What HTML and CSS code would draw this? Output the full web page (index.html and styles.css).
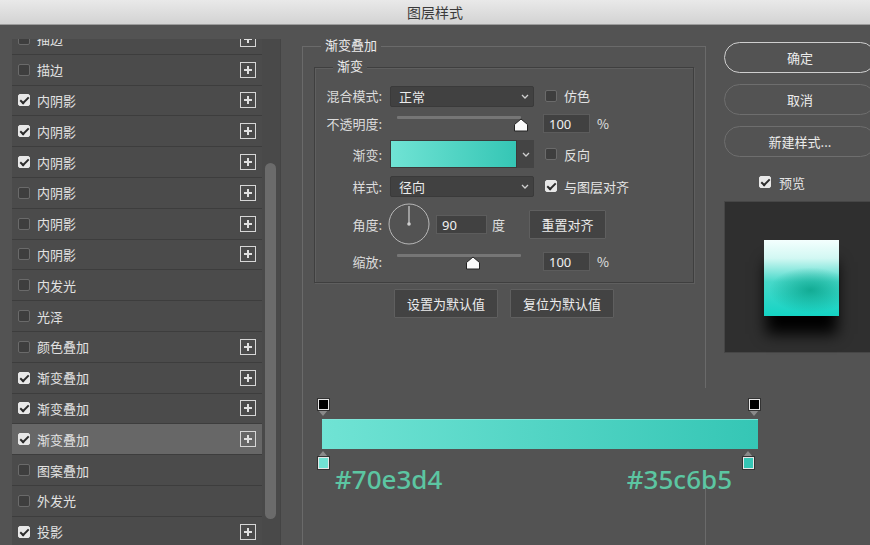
FILE: index.html
```html
<!DOCTYPE html>
<html lang="zh-CN">
<head>
    <meta charset="UTF-8">
    <meta name="viewport" content="width=device-width, initial-scale=1.0">
    <title>图层样式</title>
    <link rel="stylesheet" href="styles.css">
</head>
<body>
    <div class="titlebar">图层样式</div>

    <div class="main">
        <!-- 样式列表 -->
        <div class="styles-col">
            <div class="style-list">
                <div class="list-inner">
                    <div class="style-row"><span class="check"></span><span class="name">描边</span><span class="add"></span></div>
                    <div class="style-row"><span class="check"></span><span class="name">描边</span><span class="add"></span></div>
                    <div class="style-row"><span class="check on"></span><span class="name">内阴影</span><span class="add"></span></div>
                    <div class="style-row"><span class="check on"></span><span class="name">内阴影</span><span class="add"></span></div>
                    <div class="style-row"><span class="check on"></span><span class="name">内阴影</span><span class="add"></span></div>
                    <div class="style-row"><span class="check"></span><span class="name">内阴影</span><span class="add"></span></div>
                    <div class="style-row"><span class="check"></span><span class="name">内阴影</span><span class="add"></span></div>
                    <div class="style-row"><span class="check"></span><span class="name">内阴影</span><span class="add"></span></div>
                    <div class="style-row"><span class="check"></span><span class="name">内发光</span></div>
                    <div class="style-row"><span class="check"></span><span class="name">光泽</span></div>
                    <div class="style-row"><span class="check"></span><span class="name">颜色叠加</span><span class="add"></span></div>
                    <div class="style-row"><span class="check on"></span><span class="name">渐变叠加</span><span class="add"></span></div>
                    <div class="style-row"><span class="check on"></span><span class="name">渐变叠加</span><span class="add"></span></div>
                    <div class="style-row selected"><span class="check on"></span><span class="name">渐变叠加</span><span class="add"></span></div>
                    <div class="style-row"><span class="check"></span><span class="name">图案叠加</span></div>
                    <div class="style-row"><span class="check"></span><span class="name">外发光</span></div>
                    <div class="style-row"><span class="check on"></span><span class="name">投影</span><span class="add"></span></div>
                </div>
            </div>
            <div class="scroll-track"><div class="scroll-thumb"></div></div>
        </div>

        <!-- 渐变叠加选项 -->
        <div class="options-col">
            <div class="group outer">
                <span class="group-title">渐变叠加</span>
                <div class="group inner">
                    <span class="group-title">渐变</span>

                    <div class="form-row r1">
                        <label class="lbl">混合模式:</label>
                        <div class="select">正常
                            <svg class="chev" width="8" height="5" viewBox="0 0 8 5"><polyline points="1,1 4,4 7,1" fill="none" stroke="#cfcfcf" stroke-width="1.3"/></svg>
                        </div>
                        <span class="check opt"></span><span class="opt-text">仿色</span>
                    </div>

                    <div class="form-row r2">
                        <label class="lbl">不透明度:</label>
                        <div class="slider">
                            <div class="track"></div>
                            <svg class="thumb" style="left: 123px" width="16" height="14" viewBox="0 0 16 14"><path d="M8 1 L14.5 6.5 V13 H1.5 V6.5 Z" fill="#fafafa" stroke="#222" stroke-width="1"/></svg>
                        </div>
                        <div class="num">100</div><span class="unit">%</span>
                    </div>

                    <div class="form-row r3">
                        <label class="lbl">渐变:</label>
                        <div class="swatch"></div>
                        <div class="swatch-drop">
                            <svg width="8" height="5" viewBox="0 0 8 5"><polyline points="1,1 4,4 7,1" fill="none" stroke="#cfcfcf" stroke-width="1.3"/></svg>
                        </div>
                        <span class="check opt"></span><span class="opt-text">反向</span>
                    </div>

                    <div class="form-row r4">
                        <label class="lbl">样式:</label>
                        <div class="select">径向
                            <svg class="chev" width="8" height="5" viewBox="0 0 8 5"><polyline points="1,1 4,4 7,1" fill="none" stroke="#cfcfcf" stroke-width="1.3"/></svg>
                        </div>
                        <span class="check on opt"></span><span class="opt-text">与图层对齐</span>
                    </div>

                    <div class="form-row r5">
                        <label class="lbl">角度:</label>
                        <svg class="dial" width="42" height="42" viewBox="0 0 42 42">
                            <circle cx="21" cy="21" r="20" fill="none" stroke="#b8b8b8" stroke-width="1"/>
                            <line x1="21" y1="21" x2="21" y2="3" stroke="#d0d0d0" stroke-width="1.2"/>
                            <circle cx="21" cy="21" r="1.8" fill="#d0d0d0"/>
                        </svg>
                        <div class="num angle">90</div><span class="unit deg">度</span>
                        <button class="btn reset">重置对齐</button>
                    </div>

                    <div class="form-row r6">
                        <label class="lbl">缩放:</label>
                        <div class="slider">
                            <div class="track"></div>
                            <svg class="thumb" style="left: 75px" width="16" height="14" viewBox="0 0 16 14"><path d="M8 1 L14.5 6.5 V13 H1.5 V6.5 Z" fill="#fafafa" stroke="#222" stroke-width="1"/></svg>
                        </div>
                        <div class="num">100</div><span class="unit">%</span>
                    </div>
                </div>

                <div class="default-btns">
                    <button class="btn">设置为默认值</button>
                    <button class="btn">复位为默认值</button>
                </div>
            </div>

            <!-- 渐变色条标注 -->
            <div class="gradient-editor">
                <div class="ramp">
                    <div class="stop top" style="left: 6px"></div>
                    <div class="stop top" style="left: 437px"></div>
                    <div class="ramp-bar"></div>
                    <div class="stop bottom" style="left: 6px; --c: #70e3d4"></div>
                    <div class="stop bottom" style="left: 431px; --c: #35c6b5"></div>
                </div>
                <div class="hex-row">
                    <span>#70e3d4</span>
                    <span>#35c6b5</span>
                </div>
            </div>
        </div>

        <!-- 按钮和预览 -->
        <div class="actions-col">
            <button class="pill primary">确定</button>
            <button class="pill">取消</button>
            <button class="pill">新建样式...</button>
            <div class="preview-check"><span class="check on"></span><span>预览</span></div>
            <div class="preview">
                <div class="preview-square"></div>
            </div>
        </div>
    </div>
</body>
</html>
```

FILE: styles.css
```css
body {
    margin: 0;
    width: 870px;
    height: 545px;
    overflow: hidden;
    background-color: #535353;
    font-family: "Noto Sans CJK SC", "Noto Sans", sans-serif;
    font-size: 13px;
    color: #e4e4e4;
}
.titlebar {
    height: 24px;
    line-height: 24px;
    text-align: center;
    font-size: 14px;
    color: #3a3a3a;
    background: linear-gradient(#e9e9e9, #d3d3d3);
    border-bottom: 1px solid #9c9c9c;
}
.main {
    display: flex;
    height: 520px;
}

/* 样式列表 */
.styles-col {
    width: 281px;
    flex-shrink: 0;
    display: flex;
    padding: 14px 0 0 12px;
    box-sizing: border-box;
}
.style-list {
    width: 250px;
    height: 506px;
    overflow: hidden;
}
.list-inner {
    margin-top: -15px;
}
.style-row {
    display: flex;
    align-items: center;
    height: 30.8px;
    box-sizing: border-box;
    padding: 0 6px;
    background-color: #4b4b4b;
    border-bottom: 1px solid #3d3d3d;
}
.style-row.selected {
    background-color: #676767;
}
.style-row .name {
    flex: 1;
    margin-left: 7px;
    color: #e2e2e2;
}
.check {
    position: relative;
    display: inline-block;
    width: 12px;
    height: 12px;
    box-sizing: border-box;
    border: 1px solid #6a6a6a;
    border-radius: 2px;
    background-color: #3e3e3e;
    flex-shrink: 0;
}
.check.on {
    border-color: #e8e8e8;
    background-color: #e8e8e8;
}
.check.on::after {
    content: '';
    position: absolute;
    left: 3px;
    top: 0;
    width: 3px;
    height: 7px;
    border: solid #2b2b2b;
    border-width: 0 2px 2px 0;
    transform: rotate(45deg);
}
.add {
    width: 16px;
    height: 16px;
    box-sizing: border-box;
    border: 1.5px solid #d6d6d6;
    background:
        linear-gradient(#e0e0e0, #e0e0e0) center / 8px 2px no-repeat,
        linear-gradient(#e0e0e0, #e0e0e0) center / 2px 8px no-repeat;
}
.scroll-track {
    width: 18px;
    height: 506px;
    background-color: #494949;
    border-right: 1px solid #444;
}
.scroll-thumb {
    width: 11px;
    height: 356px;
    margin: 124px 0 0 3px;
    border-radius: 6px;
    background-color: #6b6b6b;
}

/* 选项 */
.options-col {
    position: relative;
    width: 443px;
    flex-shrink: 0;
    padding: 21px 18px 0 21px;
    box-sizing: border-box;
}
.group {
    position: relative;
    border: 1px solid #6a6a6a;
}
.group.outer {
    height: 560px;
}
.group.inner {
    margin: 20px 11px 0;
    padding: 17px 0 10px;
    border-color: #3f3f3f;
    box-shadow: inset 1px 1px 0 #5f5f5f, 1px 1px 0 #5f5f5f;
}
.group-title {
    position: absolute;
    top: -11px;
    left: 18px;
    padding: 0 4px;
    line-height: 18px;
    background-color: #535353;
    color: #ececec;
}
.form-row {
    display: flex;
    align-items: center;
    height: 22px;
}
.r1 { line-height: 20px; }
.r2 { margin-top: 5px; }
.r3 { margin-top: 6px; height: 28px; }
.r4 { margin-top: 7px; }
.r5 { margin-top: 6px; height: 42px; }
.r6 { margin-top: 5px; }
.lbl {
    width: 67px;
    margin-right: 8px;
    text-align: right;
    color: #dcdcdc;
}
.select {
    position: relative;
    width: 144px;
    height: 21px;
    line-height: 19px;
    box-sizing: border-box;
    padding-left: 8px;
    background-color: #414141;
    border: 1px solid #3a3a3a;
    border-radius: 2px;
    color: #ececec;
}
.chev {
    position: absolute;
    right: 4px;
    top: 7px;
}
.opt {
    margin-left: 11px;
}
.opt-text {
    margin-left: 7px;
    color: #e4e4e4;
}
.slider {
    position: relative;
    width: 144px;
    height: 22px;
}
.track {
    margin: 4px 13px 0 7px;
    height: 3px;
    background-color: #767676;
    border-radius: 1px;
}
.thumb {
    position: absolute;
    top: 6px;
}
.num {
    width: 47px;
    height: 19px;
    line-height: 19px;
    box-sizing: border-box;
    margin-left: 9px;
    padding-left: 5px;
    background-color: #414141;
    border: 1px solid #5c5c5c;
    font-family: "Noto Sans", sans-serif;
    color: #f0f0f0;
}
.num.angle {
    width: 51px;
    margin-left: 6px;
}
.unit {
    margin-left: 7px;
    color: #e0e0e0;
}
.unit.deg {
    margin-left: 5px;
}
.swatch {
    width: 127px;
    height: 28px;
    box-sizing: border-box;
    border: 1px solid #3a3a3a;
    background: linear-gradient(to right, #70e3d4, #35c6b5);
}
.swatch-drop {
    display: flex;
    align-items: center;
    justify-content: center;
    width: 17px;
    height: 28px;
    background-color: #444;
}
.dial {
    margin-left: -2px;
}
.btn {
    height: 29px;
    padding: 0;
    box-sizing: border-box;
    background-color: #434343;
    border: 1px solid #5f5f5f;
    border-radius: 1px;
    font-family: inherit;
    font-size: 13px;
    color: #ececec;
}
.btn.reset {
    width: 77px;
    margin-left: 24px;
}
.default-btns {
    display: flex;
    justify-content: center;
    gap: 12px;
    margin-top: 6px;
}
.default-btns .btn {
    width: 104px;
}

/* 渐变色条 */
.gradient-editor {
    position: absolute;
    left: 31px;
    top: 363px;
    width: 458px;
}
.ramp {
    position: relative;
    height: 82px;
    padding-top: 31px;
    box-sizing: border-box;
    background-color: #535353;
}
.ramp-bar {
    width: 436px;
    height: 30px;
    margin-left: 10px;
    box-sizing: border-box;
    border-top: 1px solid #7fe6d9;
    background: linear-gradient(to right, #70e3d4, #35c6b5);
}
.stop {
    position: absolute;
    width: 11px;
}
.stop::before,
.stop::after {
    content: '';
    display: block;
}
.stop.top {
    top: 11px;
}
.stop.top::before {
    width: 11px;
    height: 11px;
    box-sizing: border-box;
    border: 1.5px solid #e6e6e6;
    outline: 1px solid #333;
    background-color: #000;
}
.stop.top::after {
    width: 0;
    height: 0;
    border-left: 5.5px solid transparent;
    border-right: 5.5px solid transparent;
    border-top: 6px solid #8a8a8a;
}
.stop.bottom {
    top: 63px;
}
.stop.bottom::before {
    width: 0;
    height: 0;
    border-left: 5.5px solid transparent;
    border-right: 5.5px solid transparent;
    border-bottom: 6px solid #8a8a8a;
}
.stop.bottom::after {
    width: 11px;
    height: 12px;
    box-sizing: border-box;
    border: 1.5px solid #e6e6e6;
    outline: 1px solid #333;
    background-color: var(--c);
}
.hex-row {
    display: flex;
    justify-content: space-between;
    margin-top: -6px;
    padding: 0 38px 0 23px;
    font-family: "Noto Sans", sans-serif;
    font-size: 26px;
    font-weight: 500;
    line-height: 30px;
    color: #5cc6a2;
}

/* 按钮和预览 */
.actions-col {
    width: 152px;
    flex-shrink: 0;
    display: flex;
    flex-direction: column;
    padding-top: 17px;
}
.pill {
    height: 31px;
    margin-bottom: 11px;
    box-sizing: border-box;
    background-color: #535353;
    border: 1.5px solid #6e6e6e;
    border-radius: 16px;
    font-family: inherit;
    font-size: 13px;
    color: #ececec;
}
.pill.primary {
    border-color: #cfcfcf;
}
.preview-check {
    display: flex;
    align-items: center;
    gap: 8px;
    height: 24px;
    margin-top: 2px;
    padding-left: 35px;
}
.preview {
    height: 152px;
    margin-top: 7px;
    box-sizing: border-box;
    padding: 38px 0 0 39px;
    background-color: #2f2f2f;
    border: 1px solid #464646;
}
.preview-square {
    width: 75px;
    height: 76px;
    background:
        radial-gradient(ellipse 55% 30% at 62% 66%, rgba(8, 160, 135, 0.8), rgba(8, 160, 135, 0)),
        linear-gradient(to bottom, #f4fffe 0%, #d2f8f3 24%, #48d9ca 55%, #14d4c4 100%);
    box-shadow: 0 20px 14px -2px #000;
}
```
